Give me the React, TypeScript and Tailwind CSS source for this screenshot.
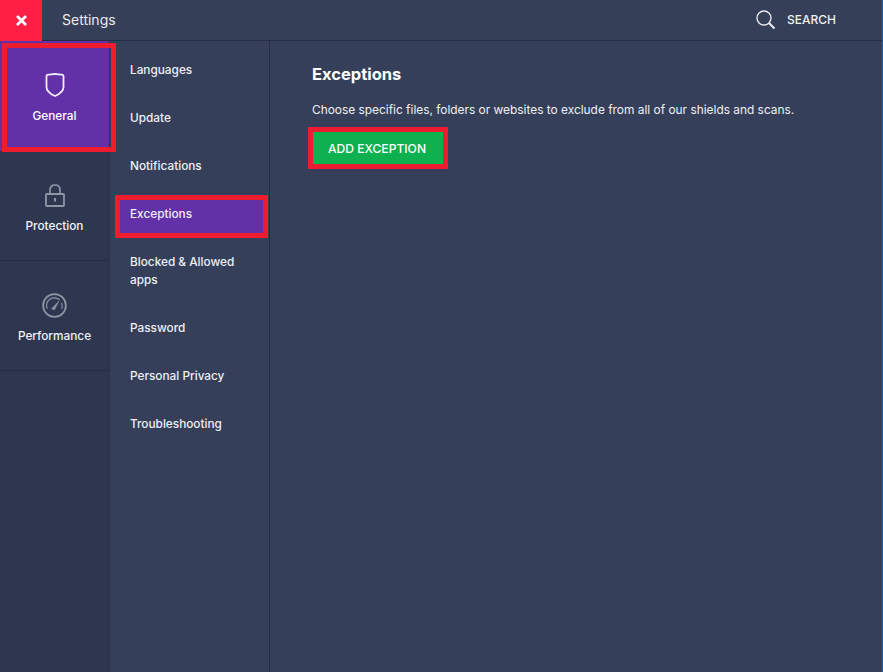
const subItems = [
  { label: "Languages" },
  { label: "Update" },
  { label: "Notifications" },
  { label: "Exceptions", active: true },
  { label: "Blocked & Allowed apps" },
  { label: "Password" },
  { label: "Personal Privacy" },
  { label: "Troubleshooting" },
];

function ShieldIcon() {
  return (
    <svg width="20" height="24" viewBox="0 0 20 24" fill="none" stroke="#f3ecfb" strokeWidth="1.800" strokeLinejoin="round">
      <path d="M1.500 3 C1.500 2 2 1.700 3 1.600 C6 1.400 7.500 1 10 1 C12.500 1 14 1.400 17 1.600 C18 1.700 18.500 2 18.500 3 V14 C18.500 18 13.500 21.500 10 23 C6.500 21.500 1.500 18 1.500 14 Z" />
    </svg>
  );
}

function LockIcon() {
  return (
    <svg width="20" height="23" viewBox="0 0 20 23" fill="none" stroke="#8f96a6">
      <path d="M5 10 V6 C5 3 7 1 10 1 C13 1 15 3 15 6 V10" strokeWidth="1.700" />
      <rect x="1" y="10" width="18" height="12" rx="1" strokeWidth="1.800" />
      <path d="M10 14 V17.500" strokeWidth="2" />
    </svg>
  );
}

function GaugeIcon() {
  return (
    <svg width="25" height="25" viewBox="0 0 26 26" fill="none" stroke="#8f96a6">
      <circle cx="13" cy="13" r="11.800" strokeWidth="1.800" />
      <path d="M5.500 16.500 A8 8 0 0 1 18.500 7.500 M20.300 10.500 A8 8 0 0 1 20.500 16.500" strokeWidth="1.200" />
      <path d="M10 16.500 L17.500 8.500 L13 17.500 Z" fill="#8f96a6" strokeWidth="0.600" />
    </svg>
  );
}

function SearchIcon() {
  return (
    <svg width="20" height="20" viewBox="0 0 20 20" fill="none" stroke="#e6e8ec">
      <circle cx="8" cy="8" r="7" strokeWidth="1.400" />
      <path d="M13 13 L18.500 18.500" strokeWidth="2.200" />
    </svg>
  );
}

function XIcon() {
  return (
    <svg width="11" height="11" viewBox="0 0 11 11" fill="none" stroke="#ffffff" strokeWidth="2.800">
      <path d="M1 1 L10 10 M10 1 L1 10" />
    </svg>
  );
}

export default function App() {
  return (
    <div className="flex h-[672px] w-[883px] flex-col overflow-hidden border-r border-[#1560b0] bg-[#363f5a] font-['Inter','Liberation_Sans',sans-serif] text-[#f1f2f5]">
      <header className="flex h-[41px] shrink-0 items-center border-b border-[#252c40] bg-[#363f58]">
        <button type="button" className="flex h-[41px] w-[42px] items-center justify-center bg-[#ff1f45]">
          <XIcon />
        </button>
        <span className="mb-[2px] ml-[20px] text-[14px] text-[#e9ebef]">Settings</span>
        <div className="ml-auto mr-[46px] flex items-center gap-[11px]">
          <SearchIcon />
          <span className="text-[12px] font-medium text-[#eef0f3]">SEARCH</span>
        </div>
      </header>

      <div className="flex min-h-0 flex-1">
        <nav className="flex w-[110px] shrink-0 flex-col border-r border-[#2a3148] bg-[#2f3750]">
          <div className="relative flex h-[110px] flex-col items-center bg-[#6231a8] pt-[32px]">
            <ShieldIcon />
            <span className="mt-[11px] text-[11.800px] font-medium text-white">General</span>
            <div className="absolute left-[2px] top-[2px] h-[109px] w-[114px] border-[5px] border-[#ed1c2e]" />
          </div>
          <div className="flex h-[110px] flex-col items-center border-b border-[#262d42] pt-[33px]">
            <LockIcon />
            <span className="mt-[11px] text-[11.800px] font-medium text-[#f1f2f5]">Protection</span>
          </div>
          <div className="flex h-[110px] flex-col items-center border-b border-[#262d42] pt-[32px]">
            <GaugeIcon />
            <span className="mt-[10px] text-[11.800px] font-medium text-[#f1f2f5]">Performance</span>
          </div>
        </nav>

        <aside className="flex w-[160px] shrink-0 flex-col border-r border-[#252c40] pt-[5px]">
          {subItems.map((item) => (
            <div key={item.label} className="relative py-[15px] pl-[20px] pr-[8px] text-[11.800px] font-medium leading-[18px] text-[#eef0f3]">
              {item.active && (
                <div className="absolute left-[5px] top-[5px] h-[43px] w-[153px] border-[5px] border-[#ed1c2e] bg-[#6231a8]" />
              )}
              <span className="relative block">{item.label}</span>
            </div>
          ))}
        </aside>

        <main className="flex-1 pl-[42px] pt-[23px]">
          <h1 className="text-[16.500px] font-bold leading-[20px] text-white">Exceptions</h1>
          <p className="mt-[17px] text-[11.900px] leading-[18px] text-[#eef0f3]">
            Choose specific files, folders or websites to exclude from all of our shields and scans.
          </p>
          <div className="relative ml-px mt-[13px] w-[130px]">
            <button type="button" className="h-[32px] w-[130px] bg-[#0db14f] pr-[2px] pt-[3px] text-[12.100px] font-medium text-white">
              ADD EXCEPTION
            </button>
            <div className="absolute -inset-[5px] border-[5px] border-[#ed1c2e]" />
          </div>
        </main>
      </div>
    </div>
  );
}
